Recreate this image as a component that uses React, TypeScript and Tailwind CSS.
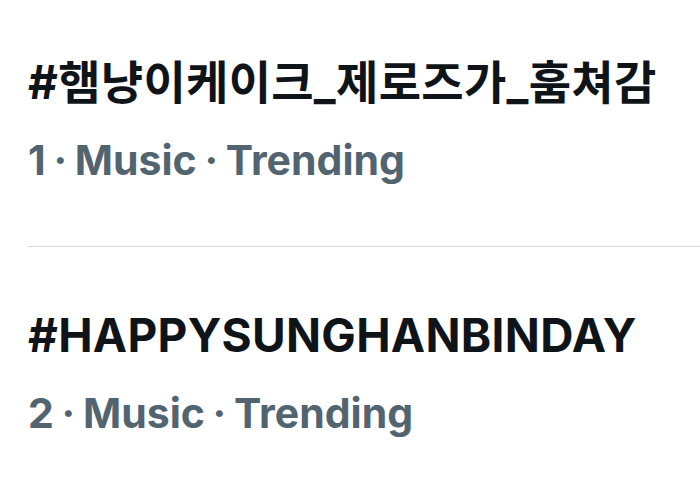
const trends = [
  { rank: 1, tag: "#햄냥이케이크_제로즈가_훔쳐감", category: "Music" },
  { rank: 2, tag: "#HAPPYSUNGHANBINDAY", category: "Music" },
];

const App = () => {
  return (
    <main
      className="h-[479px] w-[700px] overflow-hidden bg-white"
      style={{ fontFamily: 'Inter, "Noto Sans CJK KR", sans-serif' }}
    >
      {trends.map((trend, i) => (
        <section key={trend.rank} className={i > 0 ? "ml-[28px] border-t border-[#cfd9de]" : "ml-[28px]"}>
          <div className={i > 0 ? "pt-[60px]" : "pt-[54px]"}>
            <h2 className="text-[46px] font-bold leading-[56px] tracking-[0.3px] text-[#0f1419]">{trend.tag}</h2>
            <p className="mt-[22px] text-[41px] font-bold leading-[56px] text-[#536471] [word-spacing:-2px]">
              {trend.rank} · {trend.category} · Trending
            </p>
          </div>
          <div className="h-[58px]" />
        </section>
      ))}
    </main>
  );
};

export default App;
